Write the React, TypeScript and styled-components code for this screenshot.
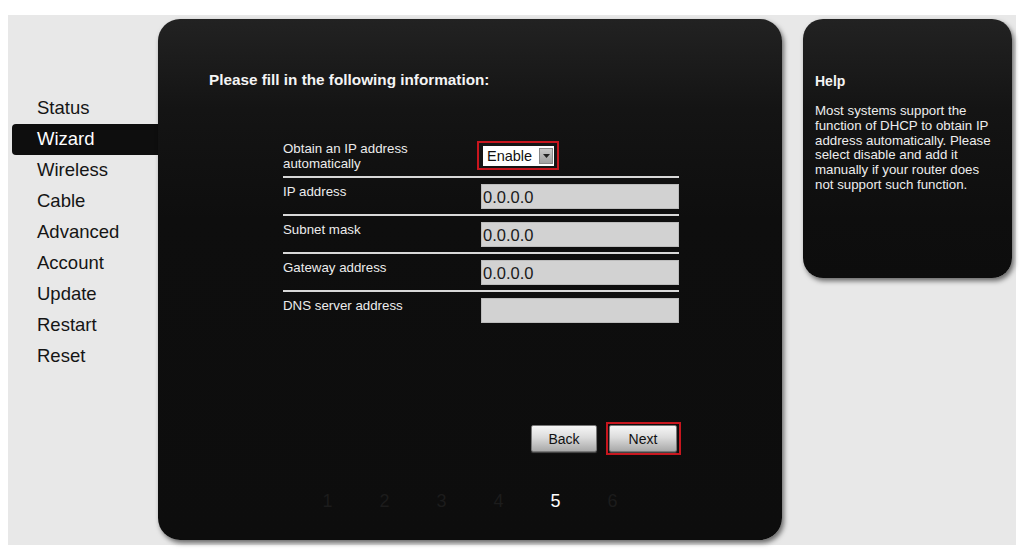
import React from "react";
import styled, { createGlobalStyle } from "styled-components";

const Global = createGlobalStyle`
  html, body { margin: 0; padding: 0; background: #ffffff; }
  body { font-family: Arial, "Liberation Sans", sans-serif; }
`;

const Page = styled.div`
  padding: 15px 8px 13px 8px;
  width: 1024px;
  box-sizing: border-box;
`;

const Stage = styled.div`
  background: #e8e8e8;
  height: 530px;
  display: flex;
  align-items: flex-start;
  padding-top: 4px;
  box-sizing: border-box;
`;

const Sidebar = styled.nav`
  width: 150px;
  padding: 74px 0 0 4px;
  box-sizing: border-box;
  display: flex;
  flex-direction: column;
`;

const MenuItem = styled.div<{ $active?: boolean }>`
  height: 31px;
  line-height: 29px;
  padding-left: 25px;
  font-size: 18.5px;
  color: ${(p) => (p.$active ? "#ffffff" : "#151515")};
  background: ${(p) => (p.$active ? "#0e0e0e" : "transparent")};
  border-radius: ${(p) => (p.$active ? "4px 0 0 4px" : "0")};
`;

const Panel = styled.div<{ $w: number; $h: number }>`
  width: ${(p) => p.$w}px;
  height: ${(p) => p.$h}px;
  border-radius: 22px;
  background: linear-gradient(#222222 0px, #141414 90px, #0e0e0e 200px, #0d0d0d 100%);
  box-shadow: 2px 3px 5px rgba(0, 0, 0, 0.55);
  box-sizing: border-box;
  color: #ffffff;
  flex-shrink: 0;
`;

const Main = styled(Panel)`
  display: flex;
  flex-direction: column;
  padding: 52px 0 0 51px;
`;

const Heading = styled.h1`
  margin: 0;
  font-size: 15.3px;
  font-weight: bold;
  color: #f4f4f4;
  line-height: 18px;
`;

const Form = styled.div`
  margin: 49px 0 0 74px;
  width: 396px;
  display: flex;
  flex-direction: column;
`;

const Row = styled.div<{ $first?: boolean; $last?: boolean }>`
  display: grid;
  grid-template-columns: 198px 198px;
  align-items: start;
  padding: ${(p) => (p.$first ? "3px 0 5px" : "6px 0 5px")};
  border-bottom: ${(p) => (p.$last ? "none" : "2px solid #d8d8d8")};
`;

const Label = styled.div`
  font-size: 13.3px;
  line-height: 15px;
  color: #ececec;
`;

const InputBox = styled.div`
  height: 25px;
  background: #d2d2d2;
  border: 1px solid #bcbcbc;
  box-sizing: border-box;
  color: #1a1a1a;
  font-size: 16.5px;
  line-height: 25px;
  padding-left: 1px;
`;

const SelectFrame = styled.div`
  margin-left: -4px;
  width: 82px;
  height: 29px;
  border: 2px solid #c8161e;
  box-sizing: border-box;
  padding: 3px 3px 2px 4px;
  background: #151515;
`;

const SelectBox = styled.div`
  height: 20px;
  display: flex;
  align-items: center;
  background: #ffffff;
  box-sizing: border-box;
  padding: 0 1px 0 4px;
  justify-content: space-between;
`;

const SelectText = styled.span`
  font-size: 14.5px;
  color: #111;
`;

const Arrow = styled.span`
  width: 14px;
  height: 16px;
  background: linear-gradient(#c8c8c8, #a0a0a0);
  border: 1px solid #888;
  box-sizing: border-box;
  display: flex;
  align-items: center;
  justify-content: center;
`;

const Buttons = styled.div`
  margin: 94px 0 0 0;
  display: flex;
  align-items: center;
  justify-content: flex-end;
  padding-right: 101px;
  gap: 9px;
`;

const Btn = styled.button<{ $w?: number }>`
  width: ${(p) => p.$w ?? 66}px;
  height: 27px;
  font-family: Arial, "Liberation Sans", sans-serif;
  font-size: 14px;
  color: #111;
  border: 1px solid #777;
  border-radius: 2px;
  background: linear-gradient(#f6f6f6, #dcdcdc 45%, #a9a9a9);
  box-shadow: 0 1px 1px rgba(255, 255, 255, 0.25);
  padding: 0;
  cursor: pointer;
`;

const BtnFrame = styled.div`
  border: 2px solid #c8161e;
  padding: 1px 2px 1px 1px;
  display: flex;
`;

const Steps = styled.div`
  margin-top: 36px;
  margin-left: -51px;
  display: flex;
  justify-content: center;
  gap: 47px;
`;

const Step = styled.span<{ $active?: boolean }>`
  font-size: 18px;
  width: 10px;
  text-align: center;
  color: ${(p) => (p.$active ? "#ffffff" : "#1c1c1c")};
`;

const Help = styled(Panel)`
  margin-left: 21px;
  padding: 53px 16px 0 12px;
  border-radius: 20px;
`;

const HelpTitle = styled.h2`
  margin: 0;
  font-size: 14px;
  font-weight: bold;
  line-height: 18px;
  color: #f4f4f4;
`;

const HelpText = styled.p`
  margin: 14px 0 0;
  font-size: 13.3px;
  line-height: 14.8px;
  color: #ededed;
`;

const menu = ["Status", "Wizard", "Wireless", "Cable", "Advanced", "Account", "Update", "Restart", "Reset"];

const fields = [
  { label: "IP address", value: "0.0.0.0" },
  { label: "Subnet mask", value: "0.0.0.0" },
  { label: "Gateway address", value: "0.0.0.0" },
  { label: "DNS server address", value: "" },
];

export default function App() {
  return (
    <Page>
      <Global />
      <Stage>
        <Sidebar>
          {menu.map((m) => (
            <MenuItem key={m} $active={m === "Wizard"}>
              {m}
            </MenuItem>
          ))}
        </Sidebar>
        <Main $w={624} $h={521}>
          <Heading>Please fill in the following information:</Heading>
          <Form>
            <Row $first>
              <Label>
                Obtain an IP address
                <br />
                automatically
              </Label>
              <SelectFrame>
                <SelectBox>
                  <SelectText>Enable</SelectText>
                  <Arrow>
                    <svg width="7" height="4" viewBox="0 0 7 4">
                      <path d="M0 0 L7 0 L3.5 4 Z" fill="#222" />
                    </svg>
                  </Arrow>
                </SelectBox>
              </SelectFrame>
            </Row>
            {fields.map((f, i) => (
              <Row key={f.label} $last={i === fields.length - 1}>
                <Label>{f.label}</Label>
                <InputBox>{f.value}</InputBox>
              </Row>
            ))}
          </Form>
          <Buttons>
            <Btn $w={66}>Back</Btn>
            <BtnFrame>
              <Btn $w={68}>Next</Btn>
            </BtnFrame>
          </Buttons>
          <Steps>
            {[1, 2, 3, 4, 5, 6].map((n) => (
              <Step key={n} $active={n === 5}>
                {n}
              </Step>
            ))}
          </Steps>
        </Main>
        <Help $w={209} $h={259}>
          <HelpTitle>Help</HelpTitle>
          <HelpText>
            Most systems support the function of DHCP to obtain IP address automatically. Please select
            disable and add it manually if your router does not support such function.
          </HelpText>
        </Help>
      </Stage>
    </Page>
  );
}
